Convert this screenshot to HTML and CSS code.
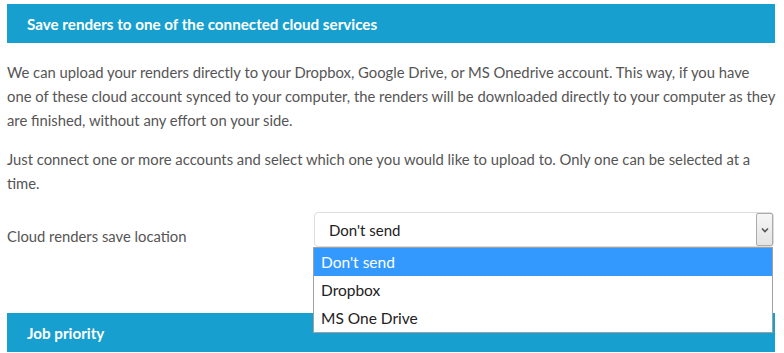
FILE: index.html
```html
<!DOCTYPE html>
<html lang="en">
<head>
  <meta charset="UTF-8">
  <title>Cloud renders</title>
  <link rel="stylesheet" href="styles.css">
</head>
<body>
  <div class="page">
    <div class="section-header">Save renders to one of the connected cloud services</div>

    <p class="info-text">We can upload your renders directly to your Dropbox, Google Drive, or MS Onedrive account. This way, if you have one of these cloud account synced to your computer, the renders will be downloaded directly to your computer as they are finished, without any effort on your side.</p>
    <p class="info-text">Just connect one or more accounts and select which one you would like to upload to. Only one can be selected at a time.</p>

    <div class="form-row">
      <label class="form-label">Cloud renders save location</label>
      <div class="select-wrap">
        <div class="select-box">
          <span class="select-value">Don't send</span>
          <span class="select-arrow">
            <svg width="8" height="6" viewBox="0 0 8 6"><path d="M1 1.5 L4 4.5 L7 1.5" fill="none" stroke="#555" stroke-width="1.6"/></svg>
          </span>
        </div>
        <ul class="select-list">
          <li class="selected">Don't send</li>
          <li>Dropbox</li>
          <li>MS One Drive</li>
        </ul>
      </div>
    </div>

    <div class="section-header">Job priority</div>
  </div>
</body>
</html>
```

FILE: styles.css
```css
* {
  margin: 0;
  padding: 0;
  box-sizing: border-box;
}

body {
  background: #FFFFFF;
  font-family: 'Lato', 'Open Sans', sans-serif;
  color: #555555;
  overflow: hidden;
}

.page {
  padding: 4px 9px 0 7px;
}

.section-header {
  height: 39px;
  background-color: #169FCF;
  color: #FFFFFF;
  font-size: 15.2px;
  font-weight: 700;
  padding: 0 20px;
  display: flex;
  align-items: center;
}

.info-text {
  font-size: 14.8px;
  line-height: 24px;
  margin-top: 15px;
}

.info-text:first-of-type {
  margin-top: 17px;
}

.form-row {
  display: flex;
  margin-top: 17px;
  margin-bottom: 65px;
}

.form-label {
  width: 307px;
  font-size: 14.8px;
  line-height: 24px;
  padding-top: 12px;
}

.select-wrap {
  position: relative;
  width: 460px;
}

.select-box {
  height: 35px;
  border: 1px solid #DDDDDD;
  border-radius: 4px;
  display: flex;
  align-items: center;
  justify-content: space-between;
  padding: 0 0 0 14px;
  color: #222222;
  font-size: 15px;
}

.select-arrow {
  width: 17px;
  height: 33px;
  border: 1px solid #ABABAB;
  border-radius: 2px;
  background: linear-gradient(#F6F6F6, #E4E4E4);
  display: flex;
  align-items: center;
  justify-content: center;
}

.select-list {
  position: absolute;
  top: 35px;
  left: -1px;
  width: 460px;
  list-style: none;
  background: #FFFFFF;
  border: 1px solid #A0A0A0;
  z-index: 2;
}

.select-list li {
  height: 28px;
  line-height: 28px;
  padding: 0 7px;
  font-size: 15.5px;
  color: #222222;
}

.select-list li.selected {
  background-color: #3399FF;
  color: #FFFFFF;
}
```
